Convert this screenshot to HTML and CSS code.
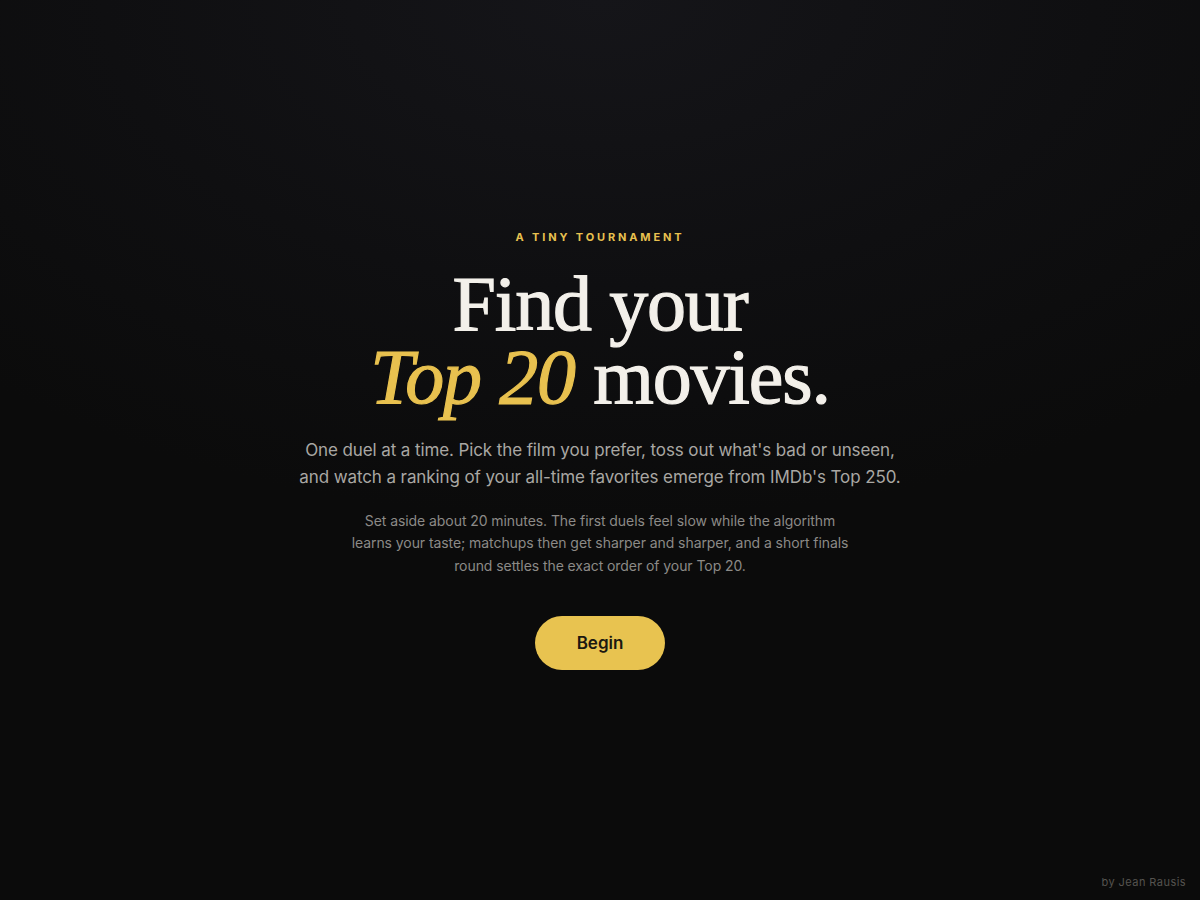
FILE: index.html
```html
<!DOCTYPE html>
<html lang="en">
<head>
<meta charset="utf-8">
<title>Find your Top 20 movies</title>
<link rel="stylesheet" href="styles.css">
</head>
<body>
<main class="page">
  <section class="hero">
    <p class="eyebrow">A TINY TOURNAMENT</p>
    <h1 class="title"><span class="line">Find your</span><span class="line"><em class="accent">Top 20</em> movies.</span></h1>
    <p class="lead">One duel at a time. Pick the film you prefer, toss out what's bad or unseen, and watch a ranking of your all-time favorites emerge from IMDb's Top 250.</p>
    <p class="note">Set aside about 20 minutes. The first duels feel slow while the algorithm learns your taste; matchups then get sharper and sharper, and a short finals round settles the exact order of your Top 20.</p>
    <button class="begin" type="button">Begin</button>
  </section>
  <footer class="credit">by Jean Rausis</footer>
</main>
</body>
</html>
```

FILE: styles.css
```css
html, body {
  margin: 0;
  padding: 0;
  height: 100%;
}
body {
  background: #0b0b0b;
  background-image: radial-gradient(ellipse 900px 520px at 50% 0%, #151519 0%, #0f0f11 55%, #0b0b0b 100%);
  color: #f3f0ea;
  font-family: Inter, "Noto Sans", sans-serif;
}
.page {
  min-height: 100vh;
  display: flex;
  flex-direction: column;
  align-items: center;
  justify-content: center;
  position: relative;
}
.hero {
  display: flex;
  flex-direction: column;
  align-items: center;
  text-align: center;
}
.eyebrow {
  margin: 0;
  font-size: 11px;
  font-weight: 700;
  letter-spacing: 0.26em;
  color: #e8c14f;
  line-height: 14px;
}
.title {
  margin: 23px 0 0;
  font-family: "Liberation Serif", "Times New Roman", serif;
  font-weight: 400;
  font-size: 78px;
  line-height: 73px;
  letter-spacing: -0.015em;
  color: #f3f0ea;
  -webkit-text-stroke: 1.2px #f3f0ea;
}
.line {
  display: block;
}
.accent {
  font-style: italic;
  color: #e8c14f;
  -webkit-text-stroke: 1.2px #e8c14f;
}
.lead {
  margin: 24px 0 0;
  max-width: 620px;
  font-size: 17px;
  line-height: 27px;
  letter-spacing: -0.006em;
  color: #a9a7a3;
}
.note {
  margin: 19px 0 0;
  max-width: 510px;
  font-size: 14px;
  line-height: 22.5px;
  letter-spacing: -0.005em;
  color: #8c8a87;
}
.begin {
  margin-top: 39px;
  width: 130px;
  height: 54px;
  border: none;
  border-radius: 27px;
  background: #e8c350;
  color: #1b1810;
  font-family: Inter, "Noto Sans", sans-serif;
  font-size: 17px;
  font-weight: 600;
  cursor: pointer;
}
.credit {
  position: absolute;
  right: 14px;
  bottom: 11px;
  font-size: 11px;
  letter-spacing: 0.04em;
  color: #55534f;
}
```
